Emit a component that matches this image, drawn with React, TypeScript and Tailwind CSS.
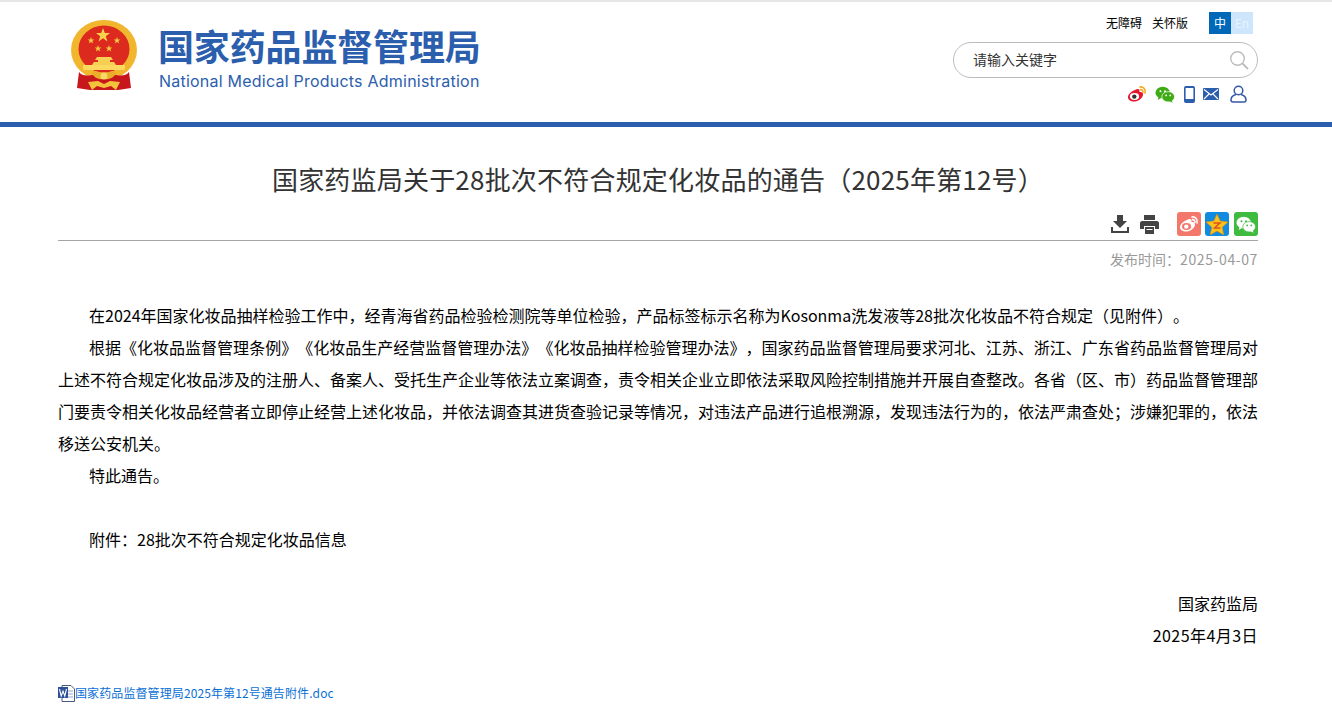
const cjk = "font-['Noto_Sans_CJK_SC','Liberation_Sans',sans-serif]";

function Emblem() {
  return (
    <svg width="68" height="71" viewBox="0 0 68 71" className="block">
      {/* gold ring */}
      <ellipse cx="34" cy="30" rx="33" ry="30" fill="#f1b62e" />
      <ellipse cx="34" cy="29" rx="25.5" ry="23.5" fill="#dc2a1f" />
      {/* ribbon */}
      <path d="M9 52 C12 56 17 56 22 55 H46 C51 56 56 56 59 52 L61 68 L48 70 H20 L7 68 Z" fill="#c8161d" />
      {/* stars */}
      <polygon points="33,8 34.8,13 40,13 35.8,16.2 37.4,21.5 33,18.3 28.6,21.5 30.2,16.2 26,13 31.2,13" fill="#f8d24a" />
      <polygon points="21,17 21.9,19.4 24.4,19.4 22.4,21 23.1,23.4 21,22 18.9,23.4 19.6,21 17.6,19.4 20.1,19.4" fill="#f5c63f" />
      <polygon points="47,17 47.9,19.4 50.4,19.4 48.4,21 49.1,23.4 47,22 44.9,23.4 45.6,21 43.6,19.4 46.1,19.4" fill="#f5c63f" />
      <polygon points="28,25 28.9,27.4 31.4,27.4 29.4,29 30.1,31.4 28,30 25.9,31.4 26.6,29 24.6,27.4 27.1,27.4" fill="#f5c63f" />
      <polygon points="39,25 39.9,27.4 42.4,27.4 40.4,29 41.1,31.4 39,30 36.9,31.4 37.6,29 35.6,27.4 38.1,27.4" fill="#f5c63f" />
      {/* tiananmen */}
      <path d="M27 37 H41 L43 40 H40 V42 H44 L46 45 H22 L24 42 H28 V40 H25 Z" fill="#f6cf55" />
      <rect x="13" y="45" width="42" height="5" rx="1" fill="#fbd85f" />
      {/* knot and lower ornament */}
      <path d="M22 53 C26 50 30 52 34 55 C38 52 42 50 46 53 C44 58 39 60 34 59 C29 60 24 58 22 53 Z" fill="#e9ad28" />
      <circle cx="34" cy="56" r="3.5" fill="#f8d866" />
      <path d="M18 62 L28 61 L34 64 L40 61 L50 62 L46 70 L41 66 L34 68 L27 66 L22 70 Z" fill="#f5c33b" />
    </svg>
  );
}

function Weibo({ color = "#e6162d", dot = "#fff", pupil = "#333" }: { color?: string; dot?: string; pupil?: string }) {
  return (
    <svg width="20" height="18" viewBox="0 0 20 18">
      <path d="M8 5 C11 3 13 4 12.5 7 C15 6.5 16.5 8 16 10 C15 14 11 16.5 7 16.5 C3.5 16.5 1 14.8 1 12 C1 9.5 4.5 6 8 5 Z" fill={color} />
      <ellipse cx="7.5" cy="11.5" rx="4.6" ry="3.4" fill={dot} />
      <circle cx="7.3" cy="11.6" r="2.2" fill={pupil} />
      <path d="M13 2 C16 1.5 19 4 18 8 M13.5 4.6 C15 4.4 16.2 5.6 15.9 7.2" stroke={color === "#fff" ? "#fff" : "#f2a81d"} strokeWidth="1.6" fill="none" strokeLinecap="round" />
    </svg>
  );
}

function Wechat({ color = "#3eab14", eye = "#fff" }: { color?: string; eye?: string }) {
  return (
    <svg width="20" height="17" viewBox="0 0 22 18">
      <ellipse cx="8.5" cy="7" rx="8" ry="6.5" fill={color} />
      <path d="M4 11 L3 15 L8 12 Z" fill={color} />
      <circle cx="6" cy="5.5" r="1.1" fill={eye} />
      <circle cx="11" cy="5.5" r="1.1" fill={eye} />
      <ellipse cx="14.5" cy="11.5" rx="7" ry="5.7" fill={color} stroke={eye} strokeWidth="0.8" />
      <path d="M18 15 L19.5 18 L15 16 Z" fill={color} />
      <circle cx="12.3" cy="10" r="1" fill={eye} />
      <circle cx="16.8" cy="10" r="1" fill={eye} />
    </svg>
  );
}

export default function App() {
  return (
    <div className={`w-[1332px] h-[715px] overflow-hidden bg-white text-[#222] [text-spacing-trim:space-all] ${cjk}`}>
      <div className="h-[2px] bg-[#e6e6e6]" />
      {/* header */}
      <div className="h-[120px] flex justify-between pl-[70px] pr-[74px]">
        <div className="flex pt-[18px]">
          <Emblem />
          <div className="ml-[20px] text-[#2b5ead]">
            <div className="pt-[2px] text-[36px] leading-[46px] font-bold whitespace-nowrap tracking-[-0.15px]">国家药品监督管理局</div>
            <div className="mt-[3px] pl-px text-[16px] leading-[20px] whitespace-nowrap font-['Inter',sans-serif] tracking-[0.225px]">National Medical Products Administration</div>
          </div>
        </div>
        <div className="w-[305px] flex flex-col items-end">
          <div className="flex items-center h-[22px] mt-[10px] mr-[5px] text-[12px] text-black">
            <span>无障碍</span>
            <span className="ml-[10px]">关怀版</span>
            <div className="ml-[21px] flex text-[12px] leading-[22px] text-center">
              <span className="w-[22px] bg-[#0068b7] text-white">中</span>
              <span className="w-[22px] bg-[#cde6fc] text-[#e8f3fd]">En</span>
            </div>
          </div>
          <div className="mt-[8px] w-[305px] h-[36px] border border-[#bcbcbc] rounded-[18px] flex items-center justify-between pl-[19px] pr-[8px]">
            <span className="text-[14px] text-[#333] mb-[2px]">请输入关键字</span>
            <svg width="20" height="20" viewBox="0 0 20 20" fill="none" stroke="#bdbdbd" strokeWidth="1.4">
              <circle cx="8.5" cy="8.5" r="6.8" />
              <path d="M13.5 13.5 L19 19" strokeWidth="1.8" />
            </svg>
          </div>
          <div className="mt-[7px] mr-[11px] flex items-center h-[18px]">
            <Weibo />
            <div className="ml-[8px]"><Wechat /></div>
            <svg className="ml-[9px]" width="11" height="17" viewBox="0 0 11 17">
              <rect width="11" height="17" rx="2" fill="#2b5ead" />
              <rect x="1.6" y="2" width="7.8" height="11" fill="#fff" />
            </svg>
            <svg className="ml-[8px]" width="16" height="12" viewBox="0 0 16 12">
              <rect width="16" height="12" rx="1" fill="#2b5ead" />
              <path d="M1 1.5 L8 7 L15 1.5 M1 11 L6 6 M15 11 L10 6" stroke="#fff" strokeWidth="1.1" fill="none" />
            </svg>
            <svg className="ml-[11px]" width="17" height="18" viewBox="0 0 17 18" fill="none" stroke="#3558a8" strokeWidth="1.5">
              <circle cx="8.5" cy="5.5" r="4.3" />
              <path d="M6 9.5 C2.5 10.5 1 13 1 15 C1 16.5 2 17 3 17 H14 C15 17 16 16.5 16 15 C16 13 14.5 10.5 11 9.5" />
            </svg>
          </div>
        </div>
      </div>
      <div className="h-[5px] bg-[#2b5ead]" />

      {/* article */}
      <div className="w-[1200px] ml-[58px]">
        <h1 className="mt-[34px] text-center text-[26px] leading-[36px] font-normal text-[#333] tracking-[0.2px]">
          国家药监局关于28批次不符合规定化妆品的通告（2025年第12号）
        </h1>
        <div className="mt-[15px] h-[29px] border-b border-[#a6a6a6] flex justify-end items-start">
          <svg className="mt-[3px]" width="18" height="18" viewBox="0 0 18 18" fill="#444">
            <path d="M6 0 H12 V6 H16 L9 13 L2 6 H6 Z" />
            <path d="M0 12 H2 V16 H16 V12 H18 V18 H0 Z" />
          </svg>
          <svg className="ml-[11px] mt-[3px]" width="19" height="19" viewBox="0 0 19 19" fill="#444">
            <path d="M4 0 H15 V5 H4 Z" />
            <path d="M2 6 H17 C18 6 19 7 19 8 V14 H15 V11 H4 V14 H0 V8 C0 7 1 6 2 6 Z" />
            <path d="M5 12 H14 V19 H5 Z M6.5 14 V15 H12.5 V14 Z" fillRule="evenodd" />
          </svg>
          <div className="ml-[18px] w-[24px] h-[24px] rounded-[3px] bg-[#f4776b] flex items-center justify-center">
            <Weibo color="#fff" dot="#f4776b" pupil="#fff" />
          </div>
          <div className="ml-[4px] w-[24px] h-[24px] rounded-[3px] bg-[#0f8be0] flex items-center justify-center">
            <svg width="22" height="21" viewBox="0 0 22 21">
              <polygon points="11,0 14.2,7 22,8 16.2,13.2 17.8,21 11,17 4.2,21 5.8,13.2 0,8 7.8,7" fill="#fdc21a" stroke="#e08a10" strokeWidth="0.6" />
              <path d="M7.5 9 H14 L8.5 14 H14.5" stroke="#d9541e" strokeWidth="1.5" fill="none" />
            </svg>
          </div>
          <div className="ml-[5px] w-[24px] h-[24px] rounded-[3px] bg-[#3fbb3f] flex items-center justify-center">
            <Wechat color="#fff" eye="#3fbb3f" />
          </div>
        </div>
        <div className="mt-[8px] text-right text-[14px] leading-[20px] text-[#999]">发布时间：<span className="tracking-[0.6px]">2025-04-07</span></div>

        <div className="mt-[30px] text-[16px] leading-[32px] text-black text-justify">
          <p className="indent-[31px]">在2024年国家化妆品抽样检验工作中，经青海省药品检验检测院等单位检验，产品标签标示名称为Kosonma洗发液等28批次化妆品不符合规定（见附件）。</p>
          <p className="indent-[31px]">根据《化妆品监督管理条例》《化妆品生产经营监督管理办法》《化妆品抽样检验管理办法》，国家药品监督管理局要求河北、江苏、浙江、广东省药品监督管理局对上述不符合规定化妆品涉及的注册人、备案人、受托生产企业等依法立案调查，责令相关企业立即依法采取风险控制措施并开展自查整改。各省（区、市）药品监督管理部门要责令相关化妆品经营者立即停止经营上述化妆品，并依法调查其进货查验记录等情况，对违法产品进行追根溯源，发现违法行为的，依法严肃查处；涉嫌犯罪的，依法移送公安机关。</p>
          <p className="indent-[31px]">特此通告。</p>
          <p className="h-[32px]" />
          <p className="indent-[31px]">附件：28批次不符合规定化妆品信息</p>
          <p className="h-[32px]" />
          <p className="text-right">国家药监局</p>
          <p className="text-right tracking-[0.45px]">2025年4月3日</p>
        </div>

        <div className="mt-[32px] flex items-center h-[20px]">
          <svg width="17" height="17" viewBox="0 0 17 17">
            <path d="M4 0.5 H13 L16.5 4 V16.5 H4 Z" fill="#fff" stroke="#4a5a7a" />
            <path d="M6 6 H15 M6 9 H15 M6 12 H15" stroke="#8fa8cf" />
            <rect x="0" y="2" width="10" height="11" fill="#2f4f9a" />
            <path d="M1.5 4 L3.2 11 L5 6 L6.8 11 L8.5 4" stroke="#fff" strokeWidth="1.1" fill="none" />
          </svg>
          <span className="text-[12px] tracking-[0.1px] text-[#0b6fd6]">国家药品监督管理局2025年第12号通告附件.doc</span>
        </div>
      </div>
    </div>
  );
}
